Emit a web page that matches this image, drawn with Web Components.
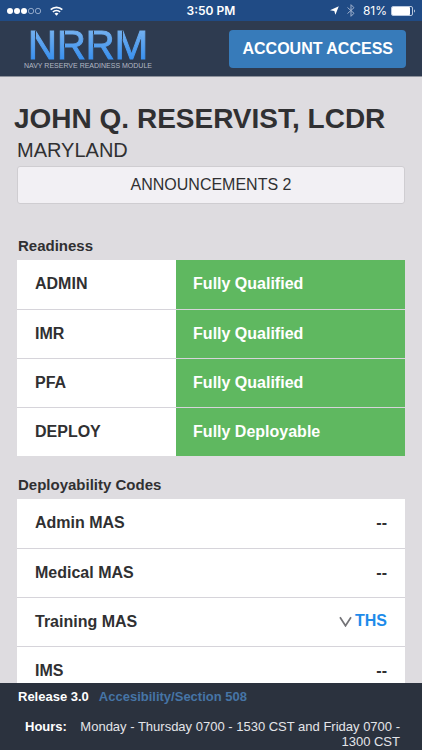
<!DOCTYPE html>
<html lang="en">
<head>
<meta charset="utf-8">
<meta name="viewport" content="width=device-width, initial-scale=1">
<title>Navy Reserve Readiness Module</title>
<style>
  html { height: 100%; }
  body {
    --ink: #303032;
    --page: #dedce0;
    --green: #5fb860;
    --blue: #377bba;
    margin: 0;
    height: 100%;
    font-family: "Liberation Sans", Arial, sans-serif;
    color: var(--ink);
    background: var(--page);
  }
</style>
</head>
<body>
<nrrm-app>
  <phone-status slot="top" time="3:50 PM" battery="81%"></phone-status>
  <app-header slot="top" action="ACCOUNT ACCESS"></app-header>
  <member-profile name="JOHN Q. RESERVIST, LCDR" place="MARYLAND">ANNOUNCEMENTS 2</member-profile>
  <status-list heading="Readiness" kind="rating">
    <status-item label="ADMIN">Fully Qualified</status-item>
    <status-item label="IMR">Fully Qualified</status-item>
    <status-item label="PFA">Fully Qualified</status-item>
    <status-item label="DEPLOY">Fully Deployable</status-item>
  </status-list>
  <status-list heading="Deployability Codes" kind="code">
    <status-item label="Admin MAS">--</status-item>
    <status-item label="Medical MAS">--</status-item>
    <status-item label="Training MAS" expandable>THS</status-item>
    <status-item label="IMS">--</status-item>
  </status-list>
  <app-footer slot="bottom" release="Release 3.0">
    <span slot="hours">Monday - Thursday 0700 - 1530 CST and Friday 0700 - 1300 CST</span>
  </app-footer>
</nrrm-app>

<script>
class Base extends HTMLElement {
  connectedCallback() {
    if (this.shadowRoot) return;
    this.attachShadow({ mode: "open" }).innerHTML = this.markup();
  }
}

customElements.define("nrrm-app", class extends Base {
  markup() {
    return `<style>
      :host { display: flex; flex-direction: column; height: 100vh; }
      main { flex: 1; min-height: 0; overflow-y: auto; scrollbar-width: none; padding: 25px 17px 0;
        display: flex; flex-direction: column; gap: 15px; }
    </style>
    <slot name="top"></slot><main><slot></slot></main><slot name="bottom"></slot>`;
  }
});

customElements.define("phone-status", class extends Base {
  markup() {
    return `<style>
      :host { display: grid; grid-template-columns: 1fr auto 1fr; align-items: center; height: 21px;
        padding: 0 6px; background: #204b85; color: #fff; font-family: Inter, "Liberation Sans", sans-serif; font-size: 12px; }
      div { display: flex; align-items: center; gap: 8px; }
      .right { justify-content: flex-end; gap: 4px; }
      .time { font-weight: 600; }
      svg { display: block; flex: none; }
    </style>
    <div>
      <svg width="36" height="8" viewBox="0 0 36 8" aria-label="Signal">
        <g fill="#fff"><circle cx="4" cy="4" r="3"/><circle cx="11" cy="4" r="3"/><circle cx="18" cy="4" r="3"/></g>
        <g fill="none" stroke="#a9bcd8" stroke-width=".8"><circle cx="25" cy="4" r="2.7"/><circle cx="32" cy="4" r="2.7"/></g>
      </svg>
      <svg width="13" height="10" viewBox="0 0 13 10" aria-label="Wi-Fi">
        <g fill="none" stroke="#fff" stroke-width="1.7"><path d="M.7 3.7a8.2 8.2 0 0 1 11.6 0"/><path d="M2.9 6a5.1 5.1 0 0 1 7.2 0"/></g>
        <path d="M6.5 9.7 4.5 7.6a2.9 2.9 0 0 1 4 0z" fill="#fff"/>
      </svg>
    </div>
    <span class="time">${this.getAttribute("time")}</span>
    <div class="right">
      <svg width="9" height="9" viewBox="0 0 9 9" aria-label="Location"><path d="M8.8.3 5.4 8.7 4.300 5 0 4.300z" fill="#fff"/></svg>
      <svg width="16" height="13" viewBox="0 0 16 13" aria-label="Bluetooth"><path d="M4.500 3.500 11 9.300 8 12.300V.7l3 3-6.500 5.800" fill="none" stroke="#9fb1cd" stroke-width="1"/></svg>
      <span>${this.getAttribute("battery")}</span>
      <svg width="25" height="10" viewBox="0 0 25 10" aria-label="Battery">
        <rect x=".5" y=".5" width="21" height="9" rx="1.500" fill="none" stroke="#b9c8de"/>
        <rect x="1" y="1" width="18" height="8" rx=".8" fill="#fff"/><path d="M23 3.200q1.800 1.800 0 3.600z" fill="#fff"/>
      </svg>
    </div>`;
  }
});

customElements.define("app-header", class extends Base {
  markup() {
    return `<style>
      :host { --bar: #2e3b50; display: flex; justify-content: space-between; align-items: center; height: 56px;
        padding: 0 16px 0 24px; background: var(--bar); border-bottom: 1px solid #8d919b; box-sizing: border-box; }
      .brand { display: flex; flex-direction: column; align-items: center; }
      /* thin bar-coloured stripes cut the stencil gap beside each stem */
      .mark { font-size: 40px; line-height: 34px; color: transparent;
        background: linear-gradient(90deg, transparent 7px, var(--bar) 7px 8px, transparent 8px) 0 0 / 29px 100%,
          linear-gradient(#78b2ee, #348ef0);
        -webkit-background-clip: text; background-clip: text; -webkit-text-stroke: 1px transparent; }
      .sub { font-size: 7px; line-height: 8px; color: #b2b9c4; white-space: nowrap; }
      button { font: bold 16px/18px "Liberation Sans", Arial, sans-serif; color: #fff; background: var(--blue);
        border: 0; border-radius: 4px; padding: 10px 13px; }
    </style>
    <div class="brand"><span class="mark">NRRM</span><span class="sub">NAVY RESERVE READINESS MODULE</span></div>
    <button type="button">${this.getAttribute("action")}</button>`;
  }
});

customElements.define("member-profile", class extends Base {
  markup() {
    return `<style>
      :host { display: block; margin-bottom: 13px; }
      h1 { margin: 0 -3px; font-size: 28px; line-height: 34px; white-space: nowrap; }
      p { margin: 0; font-size: 20px; line-height: 28px; }
      button { display: block; width: 100%; margin-top: 2px; padding: 8px; font: 16px/20px "Liberation Sans", Arial, sans-serif;
        color: var(--ink); background: #f2f0f4; border: 1px solid #cfcdd1; border-radius: 3px; }
    </style>
    <h1>${this.getAttribute("name")}</h1><p>${this.getAttribute("place")}</p>
    <button type="button"><slot></slot></button>`;
  }
});

customElements.define("status-list", class extends Base {
  markup() {
    const chevron = `<svg width="13" height="11" viewBox="0 0 13 11" aria-hidden="true"><path d="M1 1.200 6.500 9.800 12 1.200" fill="none" stroke="#737377" stroke-width="1.700"/></svg>`;
    const rows = [...this.querySelectorAll("status-item")].map(item => {
      const value = item.hasAttribute("expandable")
        ? `<button type="button" aria-expanded="false">${chevron}${item.textContent}</button>` : item.textContent;
      return `<tr><th scope="row">${item.getAttribute("label")}</th><td>${value}</td></tr>`;
    }).join("");
    return `<style>
      :host { display: block; }
      h2 { margin: 0; padding: 0 1px; font-size: 15px; line-height: 28px; }
      table { width: 100%; border-collapse: collapse; table-layout: fixed; background: #fff; font-size: 16px; font-weight: bold; }
      th, td { height: 49px; box-sizing: border-box; padding: 0 18px; text-align: left; }
      th { width: 41%; }
      tr + tr { border-top: 1px solid #d6d4da; }
      :host([kind="rating"]) td { background: var(--green); color: #fff; padding: 0 17px; }
      :host([kind="code"]) td { text-align: right; }
      button { display: inline-flex; align-items: center; gap: 3px; border: 0; padding: 0; background: none; font: inherit; color: #1d8bea; }
    </style>
    <h2>${this.getAttribute("heading")}</h2><table><tbody>${rows}</tbody></table>`;
  }
});

customElements.define("app-footer", class extends Base {
  markup() {
    return `<style>
      :host { display: block; background: #2b323e; color: #e4e5e9; padding: 6px 22px 0 18px; font-size: 13px; line-height: 15px; }
      nav { display: flex; gap: 10px; font-weight: bold; line-height: 16px; }
      b { color: #fff; }
      a { color: #4675a6; text-decoration: none; }
      .hours { display: flex; gap: 4px; padding: 14px 0 1px 7px; }
      slot { display: block; flex: 1; text-align: right; }
    </style>
    <nav><b>${this.getAttribute("release")}</b><a href="#accessibility">Accesibility/Section 508</a></nav>
    <div class="hours"><b>Hours:</b><slot name="hours"></slot></div>`;
  }
});
</script>
</body>
</html>
